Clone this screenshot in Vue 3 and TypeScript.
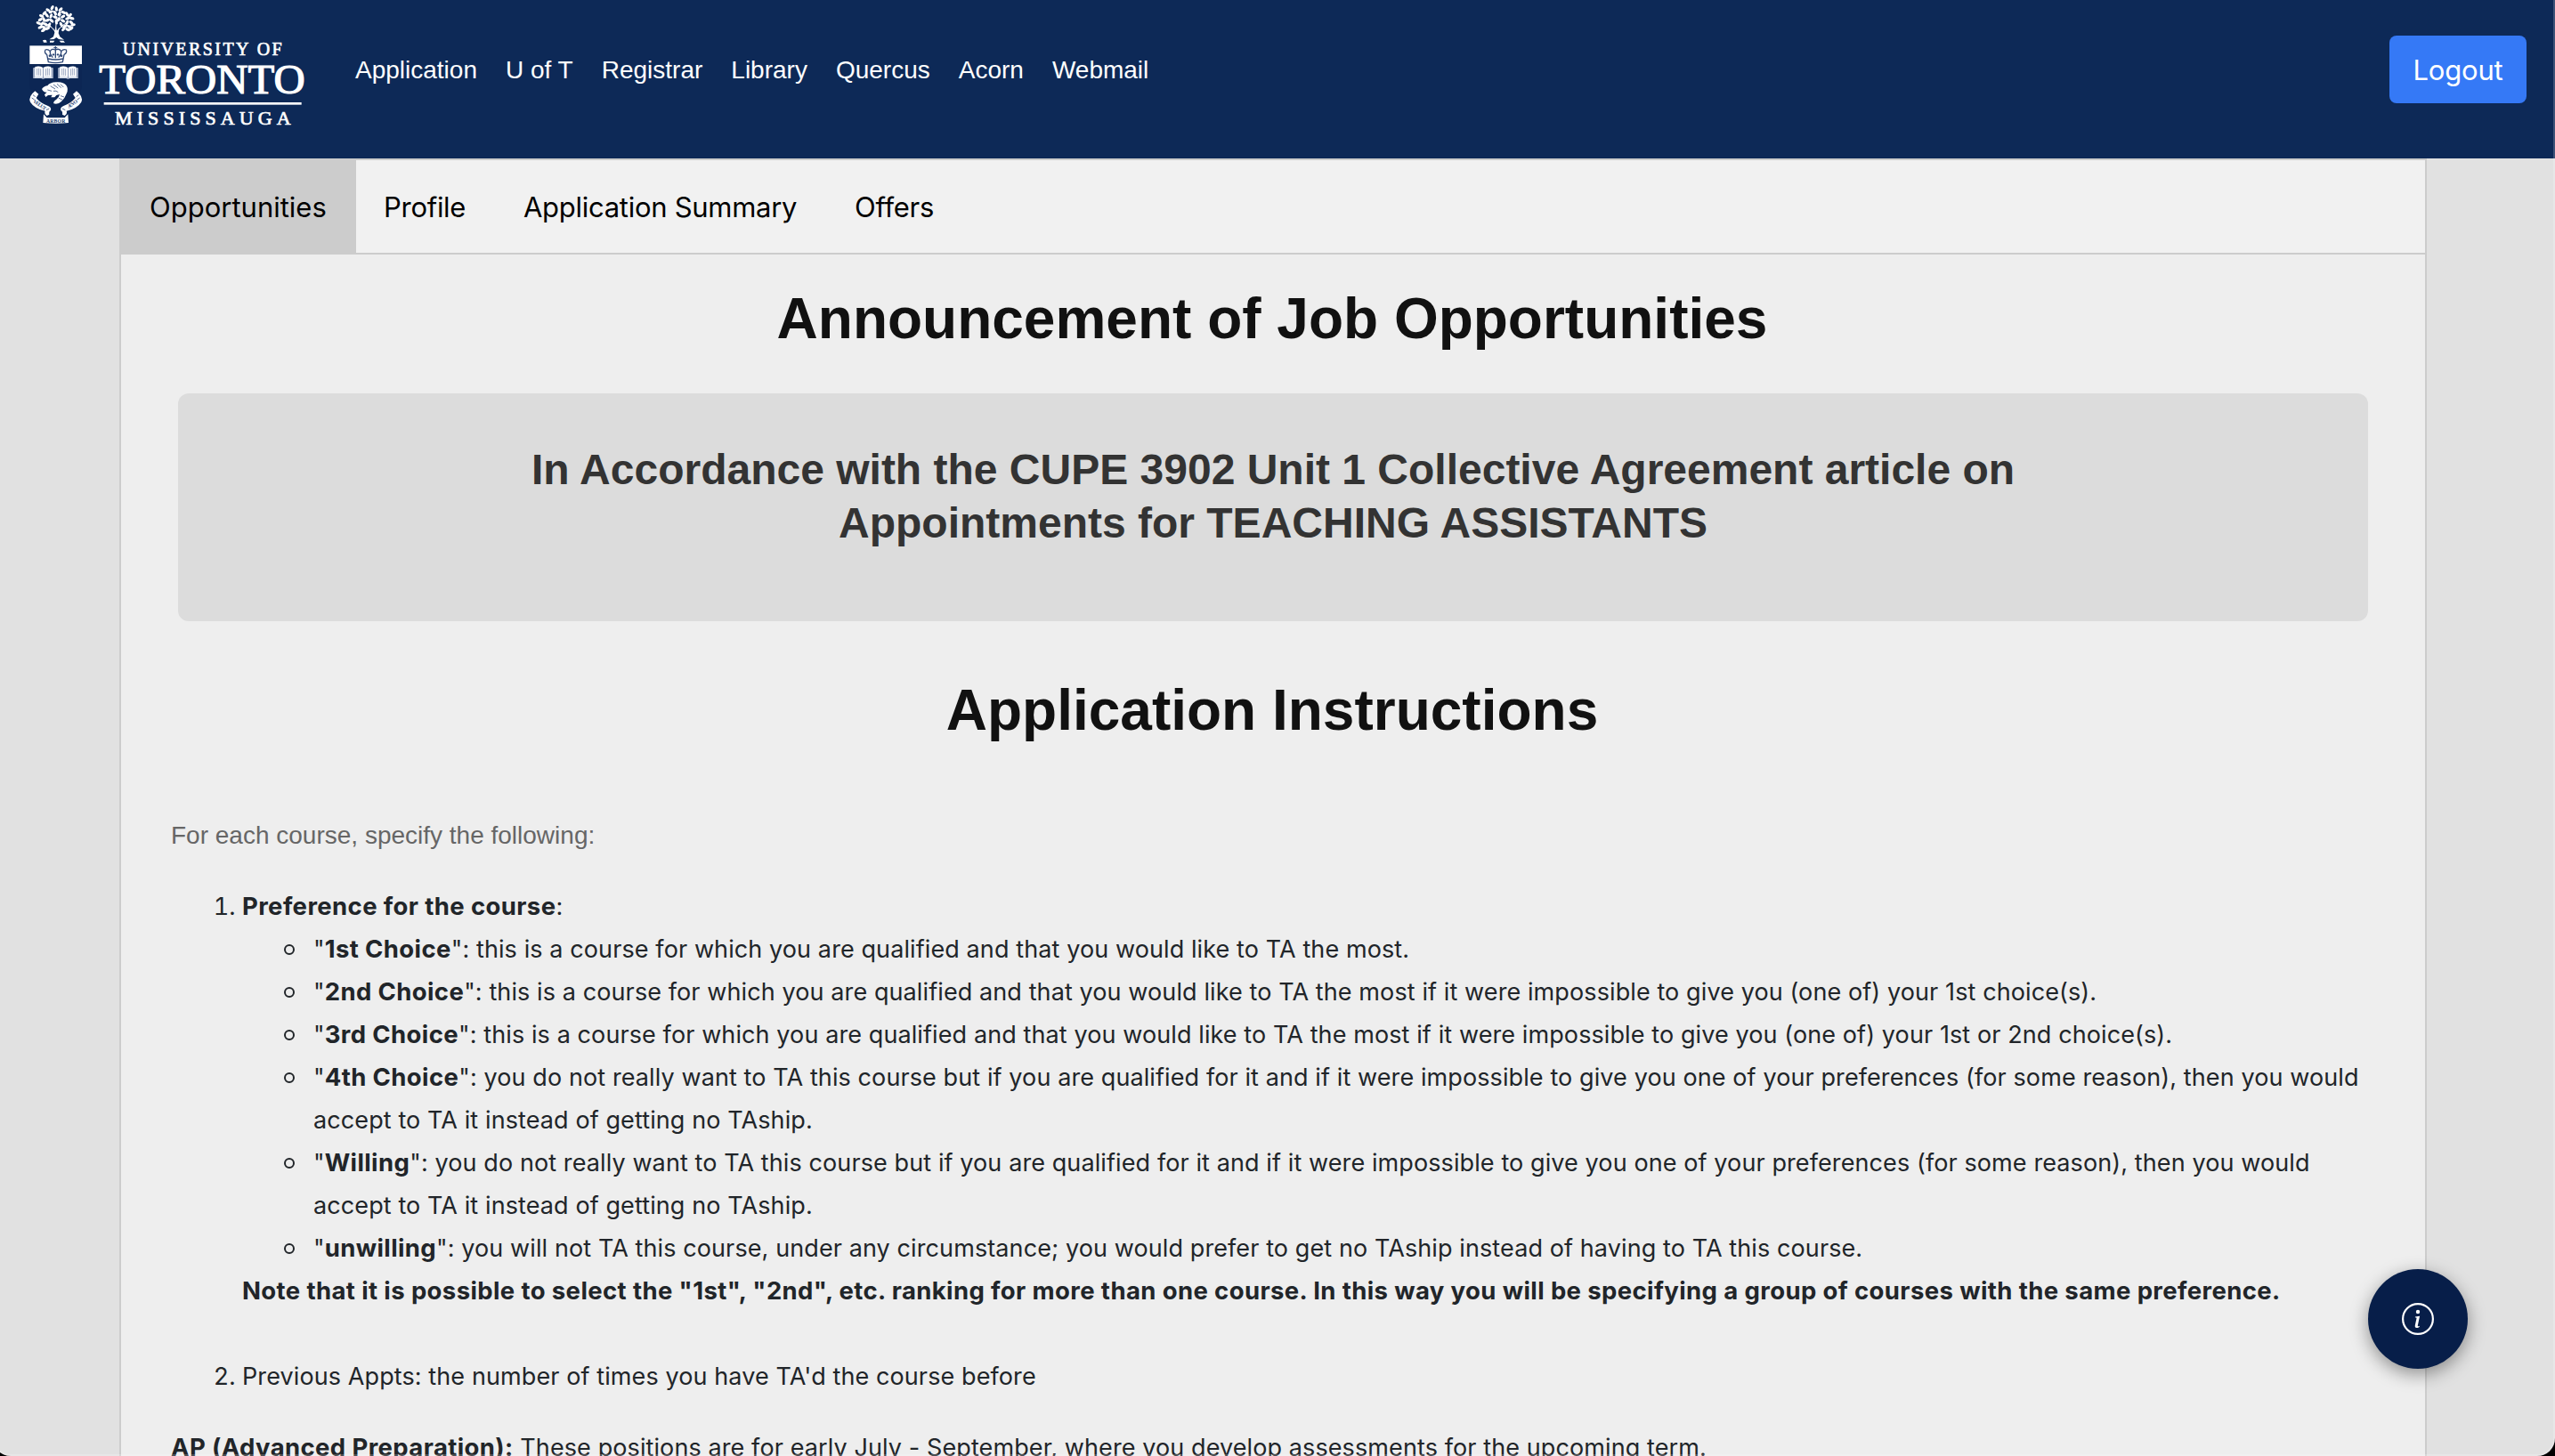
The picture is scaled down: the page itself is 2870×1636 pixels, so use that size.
<script setup lang="ts">
interface Choice {
  label: string
  text: string
}

const links: string[] = ['Application', 'U of T', 'Registrar', 'Library', 'Quercus', 'Acorn', 'Webmail']
const tabs: string[] = ['Opportunities', 'Profile', 'Application Summary', 'Offers']
const activeTab = 'Opportunities'

const choices: Choice[] = [
  { label: '1st Choice', text: 'this is a course for which you are qualified and that you would like to TA the most.' },
  {
    label: '2nd Choice',
    text: 'this is a course for which you are qualified and that you would like to TA the most if it were impossible to give you (one of) your 1st choice(s).',
  },
  {
    label: '3rd Choice',
    text: 'this is a course for which you are qualified and that you would like to TA the most if it were impossible to give you (one of) your 1st or 2nd choice(s).',
  },
  {
    label: '4th Choice',
    text: 'you do not really want to TA this course but if you are qualified for it and if it were impossible to give you one of your preferences (for some reason), then you would accept to TA it instead of getting no TAship.',
  },
  {
    label: 'Willing',
    text: 'you do not really want to TA this course but if you are qualified for it and if it were impossible to give you one of your preferences (for some reason), then you would accept to TA it instead of getting no TAship.',
  },
  {
    label: 'unwilling',
    text: 'you will not TA this course, under any circumstance; you would prefer to get no TAship instead of having to TA this course.',
  },
]

// Leaf clusters of the crest's tree: x, y, rotation
const leaves: [number, number, number][] = [
  [176, 26, -60], [190, 30, 80], [204, 32, -40], [162, 34, 30], [172, 40, -20], [186, 44, 60],
  [200, 46, -60], [214, 42, 20], [150, 44, -40], [158, 52, 50], [172, 54, -70], [186, 58, 20],
  [212, 56, -30], [226, 48, 60], [236, 52, -50], [242, 62, 10], [228, 62, -20], [140, 54, 20],
  [136, 66, -30], [148, 66, 70], [160, 68, -20], [174, 70, 40], [198, 66, -50], [212, 70, 30],
  [226, 76, -60], [240, 76, 40], [246, 84, -10], [130, 78, 20], [142, 80, -50], [154, 82, 30],
  [166, 84, -60], [206, 82, 60], [220, 88, -20], [234, 90, 30], [136, 92, -20], [148, 94, 50],
  [160, 96, -20], [214, 98, -50], [228, 100, 20], [240, 96, -40], [146, 102, -30], [190, 74, 80],
]
</script>

<template>
  <div class="page">
    <header class="header">
      <svg class="logo" viewBox="0 0 1080 480" role="img" aria-label="University of Toronto Mississauga">
        <!-- tree -->
        <g fill="#fff">
          <ellipse
            v-for="([x, y, r], i) in leaves"
            :key="i"
            :cx="x"
            :cy="y"
            rx="8.6"
            ry="4.8"
            :transform="`rotate(${r} ${x} ${y})`"
          />
          <path d="M181 92 L184 110 L180 124 L166 133 L182 132 L190 126 L198 132 L216 134 L202 124 L197 112 L200 92 L192 104 L188 88 L186 104Z" />
          <path d="M144 136 q8 -4 12 0 l2 7 h-11z M168 137 h16 l-4 6 h-12z M200 137 h14 l5 6 h-14z" />
        </g>
        <g fill="none" stroke="#fff" stroke-width="3">
          <path d="M187 108 L172 90 L152 78 M172 90 L150 90 M191 106 L208 88 L228 74 M206 90 L226 94 M188 100 L190 60 L180 36 M190 70 L206 48" />
        </g>

        <!-- shield -->
        <path d="M100 217 H276 V290 Q266 342 222 362 L188 378 L154 362 Q110 342 100 290Z" fill="#0c2654" />
        <rect x="100" y="154" width="176" height="62" fill="#fff" />
        <g fill="none" stroke="#314a78" stroke-width="4">
          <path d="M163 209 L158 184 Q148 178 153 168 Q161 164 169 173 Q174 162 187 168 Q201 162 206 173 Q214 164 223 168 Q227 178 216 184 L211 209 Q187 215 163 209Z" />
          <path d="M162 198 Q187 204 213 198" />
          <path d="M169 173 Q167 182 178 194 M206 173 Q208 182 197 194 M187 168 V196" />
          <path d="M187 156 V168 M181 161 H193" stroke-width="3.5" />
        </g>
        <g fill="#314a78">
          <circle cx="168" cy="188" r="4" />
          <circle cx="180" cy="184" r="3.5" />
          <circle cx="195" cy="184" r="3.5" />
          <circle cx="207" cy="188" r="4" />
        </g>

        <!-- books -->
        <g v-for="x in [112, 196]" :key="x" :transform="`translate(${x} 223)`">
          <path d="M0 6 H6 V2 Q20 -2 33 5 Q47 -2 60 2 V6 H67 V41 H40 L33 43 L27 41 H0Z" fill="#d9dfea" />
          <path d="M7 3 Q21 -1 32 6 V36 Q20 31 7 35Z M35 6 Q47 -1 59 3 V35 Q47 31 35 36Z" fill="#fff" />
          <path
            d="M33.500 5 V42 M13 8 V31 M19 7 V31 M25 9 V32 M42 9 V32 M48 7 V31 M54 8 V31 M3 8 V40 M64 8 V40"
            stroke="#5c719a"
            stroke-width="1.8"
            fill="none"
          />
        </g>

        <!-- beaver -->
        <path
          d="M141 300 Q150 289 160 289 Q168 278 188 277 Q212 274 223 287 Q232 300 224 316 Q219 331 207 342 Q194 354 181 349 Q178 343 190 335 Q200 327 201 318 L190 321 L184 328 H172 L176 320 L162 321 L154 327 L150 319 L158 311 Q146 312 141 300Z"
          fill="#fff"
        />
        <path
          d="M170 290 L186 300 M180 285 L196 297 M192 283 L206 296 M204 284 L214 294 M160 303 L174 307 M180 307 Q190 304 196 311 M198 331 L210 336 M204 323 L216 327"
          stroke="#314a78"
          stroke-width="2.400"
          fill="none"
        />

        <!-- motto scroll -->
        <path
          d="M118 307 L130 317 L122 330 Q136 348 162 357 Q174 362 171 372 Q164 376 166 386 L158 390 Q148 382 152 374 Q116 366 102 344 Q94 326 118 307Z"
          fill="#fff"
        />
        <path
          d="M258 307 L246 317 L254 330 Q240 348 214 357 Q202 362 205 372 Q212 376 210 386 L218 390 Q228 382 224 374 Q260 366 274 344 Q282 326 258 307Z"
          fill="#fff"
        />
        <path d="M147 385 L158 397 H218 L229 385 L231 414 Q188 418 145 414Z" fill="#fff" />
        <path d="M111 320 L119 326 M107 330 L116 336 M265 320 L257 326 M269 330 L260 336 M166 366 L156 371 M210 366 L220 371" stroke="#314a78" stroke-width="2.500" />
        <g fill="#23406f" font-family="'Liberation Serif', serif" font-weight="bold">
          <text x="110" y="344" font-size="17" transform="rotate(35 110 344)" textLength="50">VELUT</text>
          <text x="232" y="366" font-size="17" transform="rotate(-36 232 366)" textLength="38">ÆVO</text>
          <text x="156" y="413" font-size="17" textLength="64">ARBOR</text>
        </g>

        <!-- wordmark -->
        <g fill="#fff" stroke="#fff" font-family="'Liberation Serif', serif">
          <text x="413" y="187" font-size="60" stroke-width="2" textLength="537">UNIVERSITY OF</text>
          <text x="334" y="314" font-size="137" stroke-width="3.5" textLength="694" lengthAdjust="spacingAndGlyphs">TORONTO</text>
          <text x="387" y="419" font-size="66" stroke-width="2" textLength="593">MISSISSAUGA</text>
        </g>
        <rect x="350" y="345" width="666" height="8" fill="#fff" />
      </svg>

      <nav class="links">
        <a v-for="link in links" :key="link">{{ link }}</a>
      </nav>
      <button class="logout" type="button">Logout</button>
    </header>

    <main class="panel">
      <div class="tabs">
        <button v-for="tab in tabs" :key="tab" type="button" class="tab" :class="{ active: tab === activeTab }">
          {{ tab }}
        </button>
      </div>

      <section class="content">
        <h1>Announcement of Job Opportunities</h1>
        <div class="notice">
          <h2>In Accordance with the CUPE 3902 Unit 1 Collective Agreement article on Appointments for TEACHING ASSISTANTS</h2>
        </div>
        <h1>Application Instructions</h1>

        <p class="intro">For each course, specify the following:</p>
        <ol class="steps">
          <li>
            <strong>Preference for the course</strong>:
            <ul>
              <li v-for="choice in choices" :key="choice.label">"<strong>{{ choice.label }}</strong>": {{ choice.text }}</li>
            </ul>
            <strong>Note that it is possible to select the "1st", "2nd", etc. ranking for more than one course. In this way you will be specifying a group of courses with the same preference.</strong>
          </li>
          <li class="previous">Previous Appts: the number of times you have TA'd the course before</li>
        </ol>
        <p class="ap"><strong>AP (Advanced Preparation):</strong> These positions are for early July - September, where you develop assessments for the upcoming term.</p>
      </section>
    </main>

    <button class="info" type="button" aria-label="Information">
      <svg viewBox="0 0 36 36" width="36" height="36">
        <circle cx="18" cy="18" r="16.900" fill="none" stroke="#fff" stroke-width="2.200" />
        <circle cx="18" cy="10" r="2.200" fill="#fff" />
        <path
          d="M20.100 14.800 L15 15.450 L14.800 16.300 L15.800 16.500 C16.450 16.650 16.600 16.900 16.450 17.550 L14.850 25.050 C14.400 27 15.100 28 16.650 28 C17.850 28 19.250 27.450 19.850 26.700 L20.050 25.800 C19.600 26.200 18.950 26.350 18.500 26.350 C17.900 26.350 17.700 25.900 17.850 25.200Z"
          fill="#fff"
        />
      </svg>
    </button>
    <div class="frame" aria-hidden="true"></div>
  </div>
</template>

<style>
body {
  margin: 0;
  overflow: hidden;
}
</style>

<style scoped>
.page {
  position: relative;
  height: 1636px;
  overflow: hidden;
  background: #e1e1e1;
  color: #212529;
  font-family: Inter, "Liberation Sans", sans-serif;
  font-size: 27px;
  line-height: 48px;
  letter-spacing: 0.1px;
}

button {
  border: 0;
  padding: 0;
  font-family: inherit;
}

.header {
  display: flex;
  align-items: flex-start;
  box-sizing: border-box;
  height: 178px;
  padding-right: 32px;
  background: #0d2957;
}

.logo {
  flex: none;
  width: 360px;
  height: 160px;
}

.links {
  display: flex;
  flex: 1;
  gap: 32px;
  margin: 55px 0 0 39px;
  color: #fff;
  font-family: "Liberation Sans", Arial, sans-serif;
  font-size: 28px;
  letter-spacing: 0;
}

.logout {
  width: 154px;
  height: 76px;
  margin-top: 40px;
  padding-top: 1px;
  border-radius: 8px;
  background: #3579f6;
  color: #fff;
  font-size: 31px;
  letter-spacing: -0.2px;
}

.panel {
  margin: 0 144px 0 134px;
  border: 2px solid #ccc;
  border-bottom: 0;
  background: #eee;
}

.tabs {
  display: grid;
  grid-template-columns: 263px 157px 372px 153px;
  height: 104px;
  border-bottom: 2px solid #ccc;
  background: #f1f1f1;
}

.tab {
  padding: 1px 0 0 32px;
  background: transparent;
  color: #000;
  font-size: 31px;
  letter-spacing: -0.28px;
  text-align: left;
  white-space: nowrap;
}

.tab.active {
  margin-right: -1px;
  background: #ccc;
  letter-spacing: 0;
}

.content {
  padding: 34px 56px 0;
}

h1 {
  margin: 0;
  padding-right: 2px;
  color: #111;
  font: bold 64px/77px "Liberation Sans", Arial, sans-serif;
  letter-spacing: 0;
  text-align: center;
}

.notice {
  display: flex;
  justify-content: center;
  align-items: flex-start;
  box-sizing: border-box;
  height: 256px;
  margin: 45px 8px 62px;
  padding-top: 56px;
  border-radius: 12px;
  background: #dcdcdc;
}

h2 {
  max-width: 1760px;
  margin: 0;
  color: #333;
  font: bold 48px/60px "Liberation Sans", Arial, sans-serif;
  letter-spacing: 0;
  text-align: center;
}

.intro {
  margin: 78px 0 32px;
  color: #666;
  font-family: "Liberation Sans", Arial, sans-serif;
  font-size: 28px;
  letter-spacing: 0;
}

.steps {
  margin: 0;
  padding-left: 80px;
}

ul {
  margin: 0;
  padding-left: 80px;
  list-style: none;
}

ul li::before {
  content: "";
  display: inline-block;
  box-sizing: border-box;
  width: 12px;
  height: 12px;
  margin: 0 21px 0 -33px;
  border: 2px solid #212529;
  border-radius: 50%;
  vertical-align: 3px;
}

strong {
  font-size: 27.5px;
  font-weight: 700;
  line-height: 1;
  letter-spacing: 0.385px;
}

.previous {
  margin-top: 48px;
}

.ap {
  margin: 32px 0 0;
  white-space: nowrap;
}

.info {
  position: absolute;
  left: 2660px;
  top: 1426px;
  display: flex;
  align-items: center;
  justify-content: center;
  width: 112px;
  height: 112px;
  border-radius: 50%;
  background: #071e49;
  box-shadow: 0 6px 20px rgba(0, 0, 0, 0.4);
}

/* Window edge: rounded lower corners and a thin highlight */
.frame {
  position: absolute;
  inset: -40px 0 0 -8px;
  border: 2px solid rgba(255, 255, 255, 0.2);
  border-radius: 20px;
  box-shadow: 0 0 0 30px #000;
  pointer-events: none;
}
</style>
